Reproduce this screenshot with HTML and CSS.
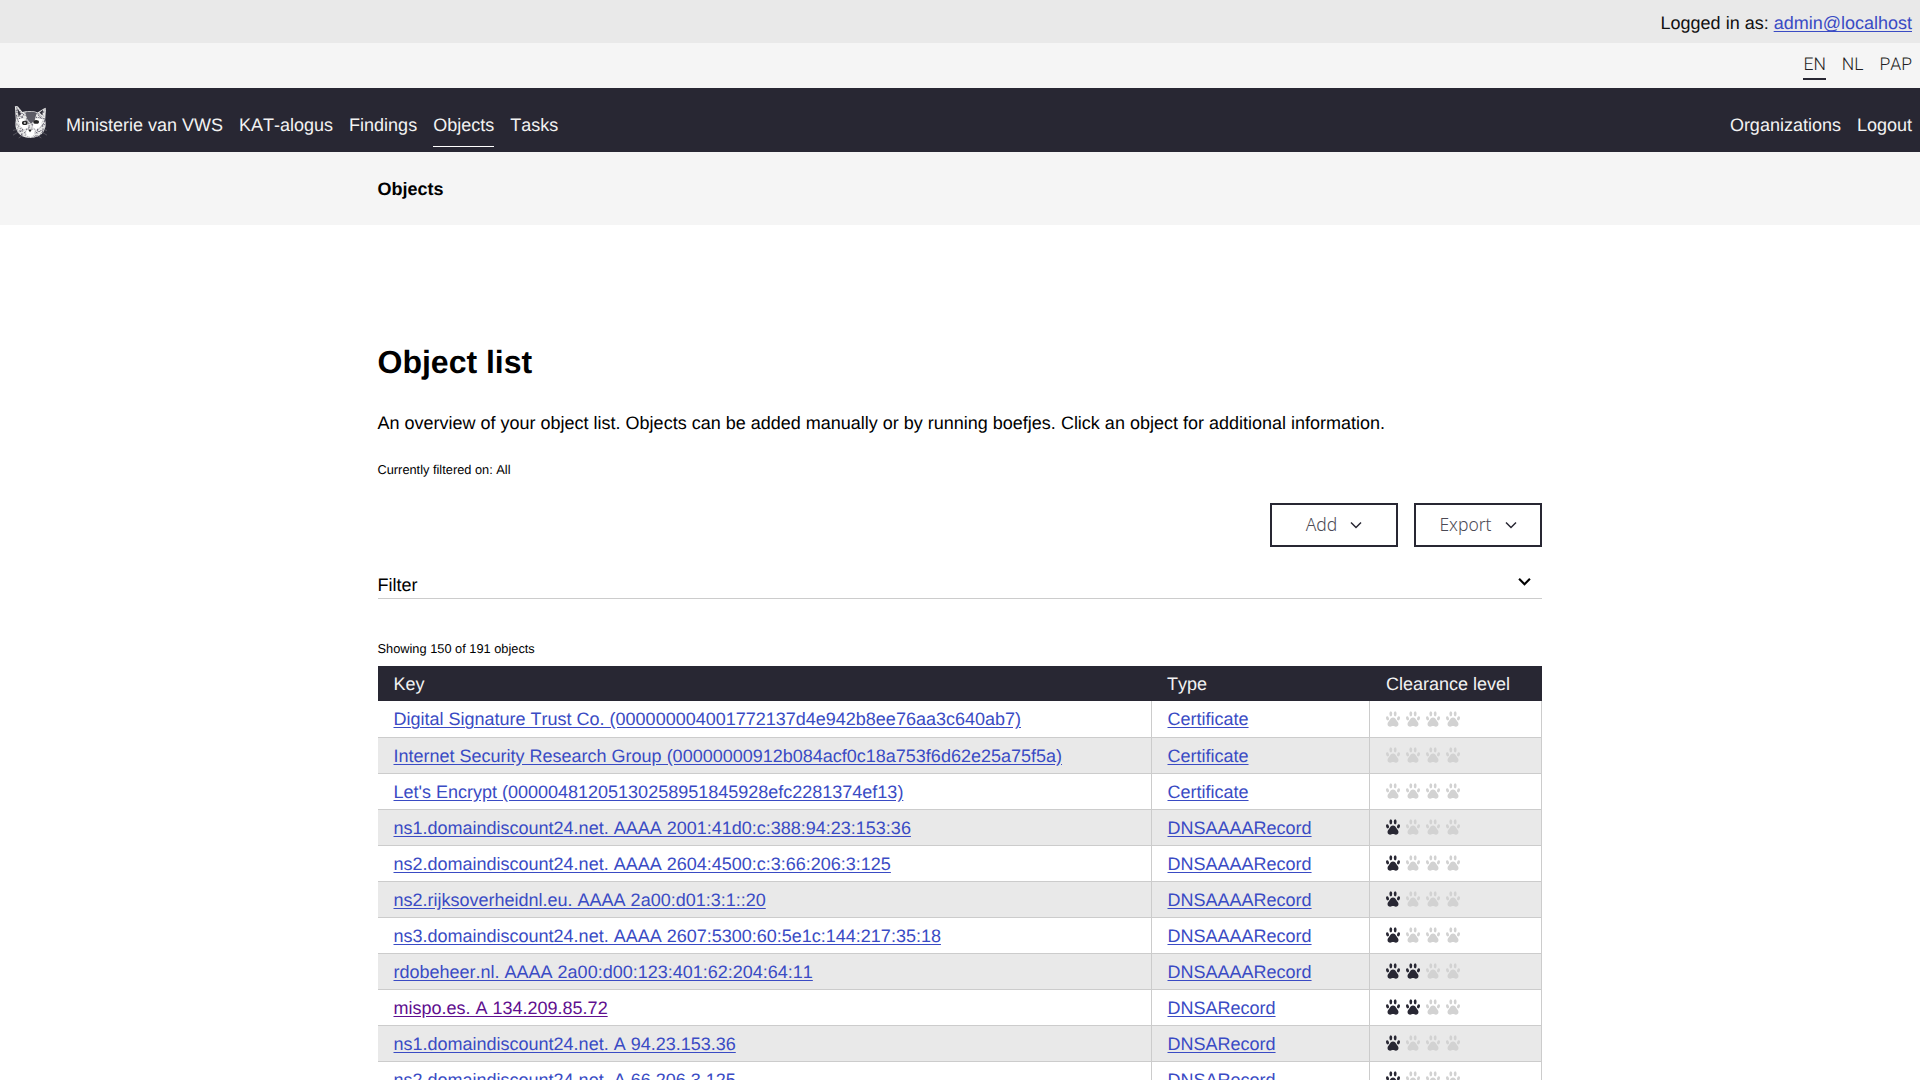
FILE: index.html
```html
<!DOCTYPE html>
<html lang="en">
<head>
<meta charset="utf-8">
<title>Objects</title>
<link rel="stylesheet" href="styles.css">
</head>
<body>
<svg class="defs" width="0" height="0" aria-hidden="true">
  <filter id="grain" x="-10%" y="-10%" width="120%" height="120%">
    <feTurbulence type="fractalNoise" baseFrequency="0.55" numOctaves="2" seed="4" result="n"/>
    <feColorMatrix in="n" type="matrix" values="0 0 0 0 0.16  0 0 0 0 0.15  0 0 0 0 0.2  3.500 0 0 0 -1.500" result="specks"/>
    <feComposite in="specks" in2="SourceAlpha" operator="in" result="inside"/>
    <feMerge><feMergeNode in="SourceGraphic"/><feMergeNode in="inside"/></feMerge>
  </filter>
  <symbol id="paw" viewBox="0 0 14 16">
    <ellipse cx="1.500" cy="7.300" rx="1.400" ry="2.100" transform="rotate(-15 1.500 7.300)"/>
    <ellipse cx="4.800" cy="2.800" rx="1.400" ry="2.600"/>
    <ellipse cx="9.200" cy="2.800" rx="1.400" ry="2.600"/>
    <ellipse cx="12.500" cy="7.300" rx="1.400" ry="2.100" transform="rotate(15 12.500 7.300)"/>
    <path d="M7 6.400c1.700 0 2.700 1.400 3.500 2.800.8 1.300 2 2.200 2 3.800 0 1.800-1.300 2.700-2.700 2.700-1.100 0-1.800-.6-2.800-.6s-1.700.6-2.800.6c-1.400 0-2.700-.9-2.700-2.700 0-1.600 1.200-2.500 2-3.800C4.300 7.800 5.300 6.400 7 6.400z"/>
  </symbol>
</svg>
<div class="userbar">Logged in as:&nbsp;<a href="#">admin@localhost</a></div>
<div class="langbar">
  <span class="lang lang-active">EN</span>
  <span class="lang">NL</span>
  <span class="lang">PAP</span>
</div>
<nav class="mainnav">
  <svg class="logo" viewBox="0 0 36 38" aria-hidden="true">
    <path fill="#e8e8e8" filter="url(#grain)" d="M2 3l3 .5 5 6c5-1.500 11-1.500 16 .5l8-5 1 1-1 12c1.500 4 .5 9-2 13-3 4-8 6-14 6S8 35 5 31c-2.500-4-3-9-2-13z"/>
    <path fill="#fff" d="M6 17l6 0 3 4 1 5-4 2-5-4zM31 17l-6 0-3 4-1 5 4 2 5-4zM14 29l4-2 5 2-1 5-4 2-4-2z"/>
    <path fill="#5c5b65" d="M13 10c3-1 9-1 12 .5L23 18l-4 4-4-5z"/>
    <path fill="#33323c" d="M4.500 5l3.500 6-2 4zM32 7l-1 6-3-3z"/>
    <ellipse cx="12.500" cy="21" rx="3" ry="2.200" fill="#222"/>
    <ellipse cx="24.500" cy="20" rx="3" ry="2" fill="#222"/>
    <circle cx="12.500" cy="21" r="1.200" fill="#bbb"/>
    <path fill="#222" d="M16 28h4l-2 3z"/>
    <path stroke="#77767e" stroke-width=".6" d="M0 29l4-1M0 34l5-3M36 29l-4-1M36 34l-5-3M6 37l3-2M30 37l-3-2"/>
  </svg>
  <a class="navlink" href="#">Ministerie van VWS</a>
  <a class="navlink" href="#">KAT-alogus</a>
  <a class="navlink" href="#">Findings</a>
  <a class="navlink navlink-active" href="#">Objects</a>
  <a class="navlink" href="#">Tasks</a>
  <span class="navspacer"></span>
  <a class="navlink" href="#">Organizations</a>
  <a class="navlink" href="#">Logout</a>
</nav>
<div class="crumbs"><div class="wrap"><b>Objects</b></div></div>
<main class="wrap content">
  <h1>Object list</h1>
  <p class="intro">An overview of your object list. Objects can be added manually or by running boefjes. Click an object for additional information.</p>
  <p class="small filtered">Currently filtered on: All</p>
  <div class="actions">
    <button class="btn" type="button">Add <svg class="chev" viewBox="0 0 12 8"><path d="M1 1.500l5 5 5-5"/></svg></button>
    <button class="btn" type="button">Export <svg class="chev" viewBox="0 0 12 8"><path d="M1 1.500l5 5 5-5"/></svg></button>
  </div>
  <div class="filter"><span>Filter</span><svg class="chev chev-bold" viewBox="0 0 12 8"><path d="M1 1.500l5 5 5-5"/></svg></div>
  <p class="small showing">Showing 150 of 191 objects</p>
  <table class="objects">
    <thead><tr><th class="col-key">Key</th><th class="col-type">Type</th><th class="col-level">Clearance level</th></tr></thead>
    <tbody>
      <tr><td><a href="#">Digital Signature Trust Co. (000000004001772137d4e942b8ee76aa3c640ab7)</a></td><td><a href="#">Certificate</a></td><td><span class="paws"><svg class="paw"><use href="#paw"/></svg><svg class="paw"><use href="#paw"/></svg><svg class="paw"><use href="#paw"/></svg><svg class="paw"><use href="#paw"/></svg></span></td></tr>
      <tr><td><a href="#">Internet Security Research Group (00000000912b084acf0c18a753f6d62e25a75f5a)</a></td><td><a href="#">Certificate</a></td><td><span class="paws"><svg class="paw"><use href="#paw"/></svg><svg class="paw"><use href="#paw"/></svg><svg class="paw"><use href="#paw"/></svg><svg class="paw"><use href="#paw"/></svg></span></td></tr>
      <tr><td><a href="#">Let's Encrypt (00000481205130258951845928efc2281374ef13)</a></td><td><a href="#">Certificate</a></td><td><span class="paws"><svg class="paw"><use href="#paw"/></svg><svg class="paw"><use href="#paw"/></svg><svg class="paw"><use href="#paw"/></svg><svg class="paw"><use href="#paw"/></svg></span></td></tr>
      <tr><td><a href="#">ns1.domaindiscount24.net. AAAA 2001:41d0:c:388:94:23:153:36</a></td><td><a href="#">DNSAAAARecord</a></td><td><span class="paws"><svg class="paw on"><use href="#paw"/></svg><svg class="paw"><use href="#paw"/></svg><svg class="paw"><use href="#paw"/></svg><svg class="paw"><use href="#paw"/></svg></span></td></tr>
      <tr><td><a href="#">ns2.domaindiscount24.net. AAAA 2604:4500:c:3:66:206:3:125</a></td><td><a href="#">DNSAAAARecord</a></td><td><span class="paws"><svg class="paw on"><use href="#paw"/></svg><svg class="paw"><use href="#paw"/></svg><svg class="paw"><use href="#paw"/></svg><svg class="paw"><use href="#paw"/></svg></span></td></tr>
      <tr><td><a href="#">ns2.rijksoverheidnl.eu. AAAA 2a00:d01:3:1::20</a></td><td><a href="#">DNSAAAARecord</a></td><td><span class="paws"><svg class="paw on"><use href="#paw"/></svg><svg class="paw"><use href="#paw"/></svg><svg class="paw"><use href="#paw"/></svg><svg class="paw"><use href="#paw"/></svg></span></td></tr>
      <tr><td><a href="#">ns3.domaindiscount24.net. AAAA 2607:5300:60:5e1c:144:217:35:18</a></td><td><a href="#">DNSAAAARecord</a></td><td><span class="paws"><svg class="paw on"><use href="#paw"/></svg><svg class="paw"><use href="#paw"/></svg><svg class="paw"><use href="#paw"/></svg><svg class="paw"><use href="#paw"/></svg></span></td></tr>
      <tr><td><a href="#">rdobeheer.nl. AAAA 2a00:d00:123:401:62:204:64:11</a></td><td><a href="#">DNSAAAARecord</a></td><td><span class="paws"><svg class="paw on"><use href="#paw"/></svg><svg class="paw on"><use href="#paw"/></svg><svg class="paw"><use href="#paw"/></svg><svg class="paw"><use href="#paw"/></svg></span></td></tr>
      <tr><td><a class="visited" href="#">mispo.es. A 134.209.85.72</a></td><td><a href="#">DNSARecord</a></td><td><span class="paws"><svg class="paw on"><use href="#paw"/></svg><svg class="paw on"><use href="#paw"/></svg><svg class="paw"><use href="#paw"/></svg><svg class="paw"><use href="#paw"/></svg></span></td></tr>
      <tr><td><a href="#">ns1.domaindiscount24.net. A 94.23.153.36</a></td><td><a href="#">DNSARecord</a></td><td><span class="paws"><svg class="paw on"><use href="#paw"/></svg><svg class="paw"><use href="#paw"/></svg><svg class="paw"><use href="#paw"/></svg><svg class="paw"><use href="#paw"/></svg></span></td></tr>
      <tr><td><a href="#">ns2.domaindiscount24.net. A 66.206.3.125</a></td><td><a href="#">DNSARecord</a></td><td><span class="paws"><svg class="paw on"><use href="#paw"/></svg><svg class="paw"><use href="#paw"/></svg><svg class="paw"><use href="#paw"/></svg><svg class="paw"><use href="#paw"/></svg></span></td></tr>
    </tbody>
  </table>
</main>
</body>
</html>
```

FILE: styles.css
```css
* { box-sizing: border-box; }
html, body { margin: 0; padding: 0; }
body {
  font-family: "Liberation Sans", Arial, sans-serif;
  font-size: 18px;
  line-height: 27px;
  color: #000;
  background: #fff;
  height: 1080px;
  overflow: hidden;
  text-rendering: geometricPrecision;
  font-kerning: none;
}
.defs { position: absolute; }
a { color: #3a4bc4; text-underline-offset: 2px; }
.userbar {
  height: 43px;
  padding: 10px 8px 0 0;
  background: #e9e9e9;
  display: flex;
  justify-content: flex-end;
  align-items: flex-start;
  color: #111;
}
.langbar {
  height: 45px;
  background: #f5f5f5;
  display: flex;
  justify-content: flex-end;
  align-items: flex-start;
  gap: 16px;
  padding-right: 8px;
}
.lang {
  height: 37px;
  padding-top: 9px;
  color: #1f1f24;
  font-family: Roboto, sans-serif;
  font-size: 17.500px;
  font-weight: 300;
  border-bottom: 2px solid transparent;
}
.lang-active { border-bottom-color: #282733; }
.mainnav {
  height: 64px;
  background: #282733;
  display: flex;
  align-items: flex-start;
  gap: 16px;
  padding: 0 8px 0 13px;
}
.logo { width: 34px; height: 36px; margin: 15px 3px 0 0; }
.navlink {
  color: #f2f2f2;
  text-decoration: none;
  height: 59px;
  padding-top: 24px;
  border-bottom: 1px solid transparent;
}
.navlink-active { border-bottom-color: #fff; }
.navspacer { flex: 1; }
.crumbs {
  height: 73px;
  background: #f5f5f5;
  display: flex;
  align-items: center;
  padding-top: 1px;
}
.wrap { width: 1164.500px; margin-left: 377.500px; }
.content { padding-top: 117px; }
h1 { font-size: 32px; line-height: 40px; margin: 0; font-weight: 700; }
.intro { margin: 28px 0 0; }
.small { font-size: 12.800px; line-height: 18px; margin: 0; }
.filtered { margin-top: 24px; }
.actions {
  display: flex;
  justify-content: flex-end;
  gap: 16px;
  margin-top: 24px;
}
.btn {
  width: 128px;
  height: 44px;
  background: #fff;
  border: 2px solid #282733;
  color: #4b4a55;
  font-family: "Noto Sans", sans-serif;
  font-size: 17.500px;
  font-weight: 300;
  display: flex;
  align-items: center;
  justify-content: center;
  gap: 13px;
  padding: 0 0 3px;
}
.chev { width: 12px; height: 8px; fill: none; stroke: #282733; stroke-width: 1.500; margin-top: 3px; }
.chev-bold { width: 13px; height: 9px; stroke: #000; stroke-width: 2; margin: -9px 11px 0 0; }
.filter {
  margin-top: 23px;
  height: 29px;
  border-bottom: 1px solid #ccc;
  display: flex;
  justify-content: space-between;
  align-items: center;
  padding-top: 3px;
}
.showing { margin-top: 41px; }
.objects {
  width: 100%;
  margin-top: 8px;
  border-collapse: collapse;
  table-layout: fixed;
}
.col-key { width: 773.500px; }
.col-type { width: 218px; }
.objects th {
  background: #282733;
  color: #f2f2f2;
  font-weight: 400;
  text-align: left;
  height: 35px;
  padding: 1px 16px 0;
}
.objects th.col-level { padding-left: 17px; }
.objects td {
  height: 36px;
  padding: 2px 16px 0;
  border: 1px solid #ccc;
  border-width: 0 1px 1px 1px;
}
.objects tbody tr:nth-child(even) td { background: #e9e9e9; }
.objects td:first-child { border-left: 0; }
.visited { color: #5f0f8f; }
.paws { display: flex; gap: 6px; align-items: center; margin-top: -2px; }
.paw { width: 14px; height: 16px; fill: #d2d2d2; }
.paw.on { fill: #282733; }
```
